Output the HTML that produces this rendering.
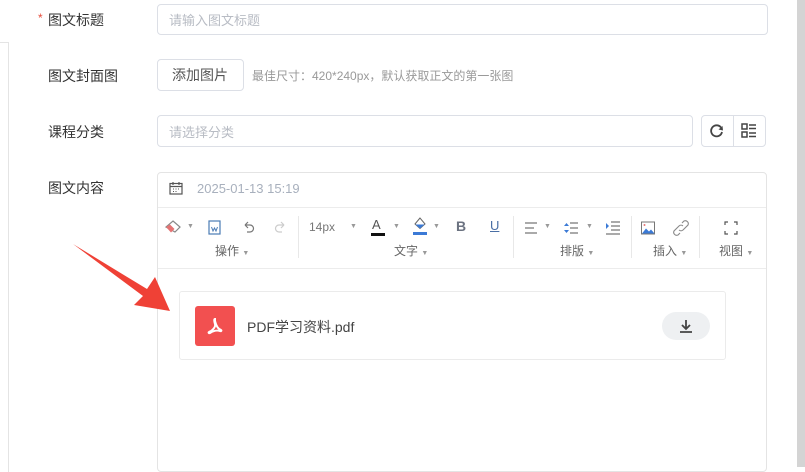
<!DOCTYPE html>
<html><head><meta charset="utf-8"><style>
*{box-sizing:border-box;margin:0;padding:0}
body{width:805px;height:467px;overflow:hidden;background:#fff;font-family:"Liberation Sans","Noto Sans CJK SC",sans-serif;position:relative;color:#606266}
.a{position:absolute}
.lbl{font-size:14px;color:#333;position:absolute;left:48px}
.inp{position:absolute;border:1px solid #dcdfe6;border-radius:4px;font-size:13px;color:#b8bcc4;padding-left:11px;display:flex;align-items:center}
.tb{position:absolute;top:218px;height:20px}
.gl{position:absolute;top:242px;font-size:12px;color:#666}
.sep{position:absolute;top:216px;width:1px;height:42px;background:#e8e8e8}
.car{font-size:7px;color:#999}
</style></head><body>
<div class="a" style="left:0;top:42px;width:9px;height:430px;border-top:1px solid #e4e4e4;border-right:1px solid #e4e4e4"></div>
<div class="a" style="left:797px;top:0;width:8px;height:467px;background:#d4d4d4"></div>

<span class="a" style="left:38px;top:11px;color:#e74c3c;font-size:12px">*</span>
<div class="lbl" style="top:10px">图文标题</div>
<div class="inp" style="left:157px;top:4px;width:611px;height:31px">请输入图文标题</div>

<div class="lbl" style="top:66px">图文封面图</div>
<div class="inp" style="left:157px;top:59px;width:87px;height:32px;color:#555;font-size:14px;padding-left:14px">添加图片</div>
<div class="a" style="left:252px;top:67px;font-size:12px;color:#999">最佳尺寸：420*240px，默认获取正文的第一张图</div>

<div class="lbl" style="top:122px">课程分类</div>
<div class="inp" style="left:157px;top:115px;width:536px;height:32px">请选择分类</div>
<div class="a" style="left:701px;top:115px;width:65px;height:32px;border:1px solid #dcdfe6;border-radius:4px"></div>
<div class="a" style="left:733px;top:116px;width:1px;height:30px;background:#dcdfe6"></div>
<svg class="a" style="left:708px;top:123px" width="18" height="16" viewBox="0 0 18 16"><path d="M13 4.5A5.5 5.5 0 1 0 14 9" fill="none" stroke="#444" stroke-width="1.8"/><path d="M10.5 6.5L15 7.5L14.5 3z" fill="#444"/></svg>
<svg class="a" style="left:740px;top:122px" width="18" height="18" viewBox="0 0 18 18"><rect x="2" y="2" width="5" height="5" fill="none" stroke="#444" stroke-width="1.5"/><rect x="2" y="10" width="5" height="5" fill="none" stroke="#444" stroke-width="1.5"/><path d="M9 3h7M9 6.5h7M9 11h7M9 14.5h7" stroke="#444" stroke-width="1.5"/></svg>

<div class="lbl" style="top:178px">图文内容</div>
<div class="a" style="left:157px;top:172px;width:610px;height:300px;border:1px solid #e4e4e4;border-radius:4px"></div>
<div class="a" style="left:158px;top:207px;width:608px;height:1px;background:#ececec"></div>
<div class="a" style="left:158px;top:268px;width:608px;height:1px;background:#ececec"></div>
<svg class="a" style="left:169px;top:181px" width="14" height="14" viewBox="0 0 14 14"><rect x="1" y="2.5" width="12" height="10.5" fill="none" stroke="#555" stroke-width="1.2"/><path d="M1 5.5h12M4 1v3M10 1v3" stroke="#555" stroke-width="1.2"/><path d="M4 8h1M6.5 8h1M9 8h1M4 10.5h1M6.5 10.5h1" stroke="#555"/></svg>
<div class="a" style="left:197px;top:181px;font-size:13px;color:#a8b0bd">2025-01-13 15:19</div>

<svg class="tb" style="left:164px" width="18" height="18" viewBox="0 0 18 18"><path d="M9 2L16 8L11 13L2 8z" fill="none" stroke="#888" stroke-width="1.2"/><path d="M2 8L6 5.5L10.5 10L7 13.5z" fill="#e57373"/></svg>
<span class="tb car" style="left:187px;top:223px">▼</span>
<svg class="tb" style="left:207px" width="16" height="18" viewBox="0 0 16 18"><rect x="2" y="2" width="11" height="13" fill="none" stroke="#4a7bb5" stroke-width="1.2"/><path d="M4.5 8l1.5 4 1.5-3 1.5 3 1.5-4" fill="none" stroke="#4a7bb5"/></svg>
<svg class="tb" style="left:240px" width="16" height="18" viewBox="0 0 16 18"><path d="M5 6h5a3.5 3.5 0 0 1 0 7H7M5 6l3-3M5 6l3 3" fill="none" stroke="#777" stroke-width="1.2"/></svg>
<svg class="tb" style="left:273px" width="16" height="18" viewBox="0 0 16 18"><path d="M11 6H6a3.5 3.5 0 0 0 0 7h3M11 6L8 3M11 6L8 9" fill="none" stroke="#ccc" stroke-width="1.2"/></svg>
<div class="sep" style="left:298px"></div>
<span class="tb" style="left:309px;top:220px;font-size:12px;color:#777">14px</span>
<span class="tb car" style="left:350px;top:223px">▼</span>
<span class="tb" style="left:372px;top:217px;font-size:13px;color:#555">A</span>
<div class="a" style="left:371px;top:233px;width:14px;height:3px;background:#111"></div>
<span class="tb car" style="left:393px;top:223px">▼</span>
<svg class="tb" style="left:412px;top:216px" width="16" height="20" viewBox="0 0 16 20"><path d="M8 2L3 8L8 12.5L13 8z" fill="none" stroke="#666"/><path d="M3.5 8.5h9L8 12.5z" fill="#3b7ad6"/><rect x="1" y="16" width="14" height="3" fill="#3b7ad6"/></svg>
<span class="tb car" style="left:433px;top:223px">▼</span>
<span class="tb" style="left:456px;top:218px;font-size:14px;font-weight:bold;color:#6b7280">B</span>
<span class="tb" style="left:490px;top:218px;font-size:13px;color:#4a6fa5;text-decoration:underline">U</span>
<div class="sep" style="left:513px"></div>
<svg class="tb" style="left:523px" width="16" height="18" viewBox="0 0 16 18"><path d="M2 4h12M2 9h9M2 14h12" stroke="#777" stroke-width="1.2"/></svg>
<span class="tb car" style="left:544px;top:223px">▼</span>
<svg class="tb" style="left:563px" width="16" height="18" viewBox="0 0 16 18"><path d="M7 4h8M7 9h8M7 14h8" stroke="#777" stroke-width="1.2"/><path d="M1 7l2.5-3 2.5 3zM1 11l2.5 3 2.5-3z" fill="#3b7ad6"/></svg>
<span class="tb car" style="left:586px;top:223px">▼</span>
<svg class="tb" style="left:605px" width="16" height="18" viewBox="0 0 16 18"><path d="M6 3h9M6 7h9M6 11h9M1 15h14" stroke="#777" stroke-width="1.2"/><path d="M1 4l3 3-3 3z" fill="#3b7ad6"/></svg>
<div class="sep" style="left:631px"></div>
<svg class="tb" style="left:640px" width="16" height="18" viewBox="0 0 16 18"><rect x="1.5" y="3" width="13" height="12" fill="none" stroke="#777"/><path d="M2 14.5l4-5 3 3 2-2 3.5 4z" fill="#3b7ad6"/><circle cx="4.5" cy="6" r="1" fill="#e57373"/></svg>
<svg class="tb" style="left:672px" width="18" height="18" viewBox="0 0 18 18"><path d="M10 4l2-2a3 3 0 0 1 4 4l-5 5a3 3 0 0 1-4 0M8 14l-2 2a3 3 0 0 1-4-4l5-5a3 3 0 0 1 4 0" fill="none" stroke="#888" stroke-width="1.1"/></svg>
<div class="sep" style="left:699px"></div>
<svg class="tb" style="left:723px" width="16" height="18" viewBox="0 0 16 18"><path d="M2 6V3h3M11 3h3v3M14 12v3h-3M5 15H2v-3" fill="none" stroke="#555" stroke-width="1.2"/></svg>

<div class="gl" style="left:215px">操作 <span class="car">▼</span></div>
<div class="gl" style="left:394px">文字 <span class="car">▼</span></div>
<div class="gl" style="left:560px">排版 <span class="car">▼</span></div>
<div class="gl" style="left:653px">插入 <span class="car">▼</span></div>
<div class="gl" style="left:719px">视图 <span class="car">▼</span></div>

<div class="a" style="left:179px;top:291px;width:547px;height:69px;border:1px solid #ebebeb;border-radius:3px"></div>
<div class="a" style="left:195px;top:306px;width:40px;height:40px;background:#f25050;border-radius:3px"></div>
<svg class="a" style="left:203px;top:314px" width="24" height="24" viewBox="0 0 24 24"><path d="M12 5c-1 0-1 2 0 5s-3 7-6 8c-1 .5 0 1.5 1 1 3-2 7-3 10-2 1 .5 2-.5 1-1-3-1-5-5-6-9 0-1.5 0-2 0-2z" fill="none" stroke="#fff" stroke-width="2"/></svg>
<div class="a" style="left:247px;top:317px;font-size:14px;color:#444">PDF学习资料.pdf</div>
<div class="a" style="left:662px;top:312px;width:48px;height:28px;background:#eef0f2;border-radius:14px"></div>
<svg class="a" style="left:678px;top:318px" width="16" height="16" viewBox="0 0 16 16"><path d="M8 2v9M4 7l4 4 4-4M2 14h12" fill="none" stroke="#444" stroke-width="1.8"/></svg>

<svg class="a" style="left:0;top:0" width="200" height="330"><polygon points="73,244 147,289 155,277 170,311 134,305 143,296" fill="#ef4136"/></svg>
</body></html>
